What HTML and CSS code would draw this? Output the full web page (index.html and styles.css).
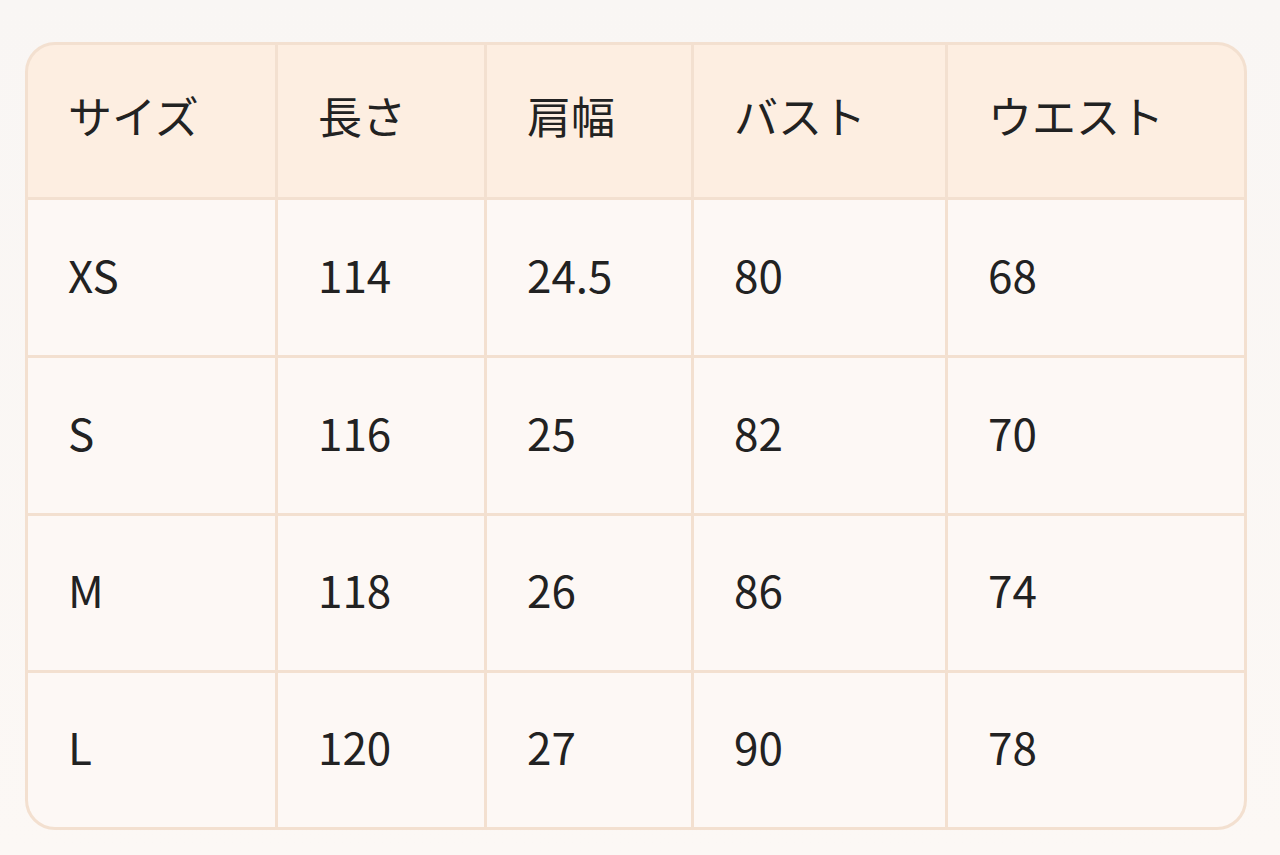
FILE: index.html
```html
<!DOCTYPE html>
<html lang="ja">
<head>
<meta charset="utf-8">
<title>サイズ表</title>
<link rel="stylesheet" href="styles.css">
</head>
<body>
<div class="page">
  <div class="size-table" role="table">
    <div class="cell head">サイズ</div>
    <div class="cell head">長さ</div>
    <div class="cell head">肩幅</div>
    <div class="cell head">バスト</div>
    <div class="cell head">ウエスト</div>

    <div class="cell">XS</div>
    <div class="cell">114</div>
    <div class="cell">24.5</div>
    <div class="cell">80</div>
    <div class="cell">68</div>

    <div class="cell">S</div>
    <div class="cell">116</div>
    <div class="cell">25</div>
    <div class="cell">82</div>
    <div class="cell">70</div>

    <div class="cell">M</div>
    <div class="cell">118</div>
    <div class="cell">26</div>
    <div class="cell">86</div>
    <div class="cell">74</div>

    <div class="cell">L</div>
    <div class="cell">120</div>
    <div class="cell">27</div>
    <div class="cell">90</div>
    <div class="cell">78</div>
  </div>
</div>
</body>
</html>
```

FILE: styles.css
```css
html, body {
  margin: 0;
  padding: 0;
}
body {
  background: linear-gradient(#f9f6f4, #fcf8f5);
  min-height: 855px;
  font-family: "Noto Sans CJK JP", "Noto Sans", sans-serif;
  color: #222222;
}
.page {
  padding: 42px 33px 0 25px;
}
.size-table {
  display: grid;
  grid-template-columns: 247px 206px 204px 251px 296px;
  grid-template-rows: 152px 155px 155px 154px 154px;
  gap: 3px;
  width: 1216px;
  background: #f3e0d0;
  border: 3px solid #f3e0d0;
  border-radius: 30px;
  overflow: hidden;
}
.cell {
  display: flex;
  align-items: center;
  padding-left: 40px;
  padding-bottom: 8px;
  background: #fdf8f5;
  font-size: 44px;
  font-weight: 400;
  line-height: 1;
}
.cell.head {
  background: #fdeee1;
  padding-bottom: 12px;
}
```
